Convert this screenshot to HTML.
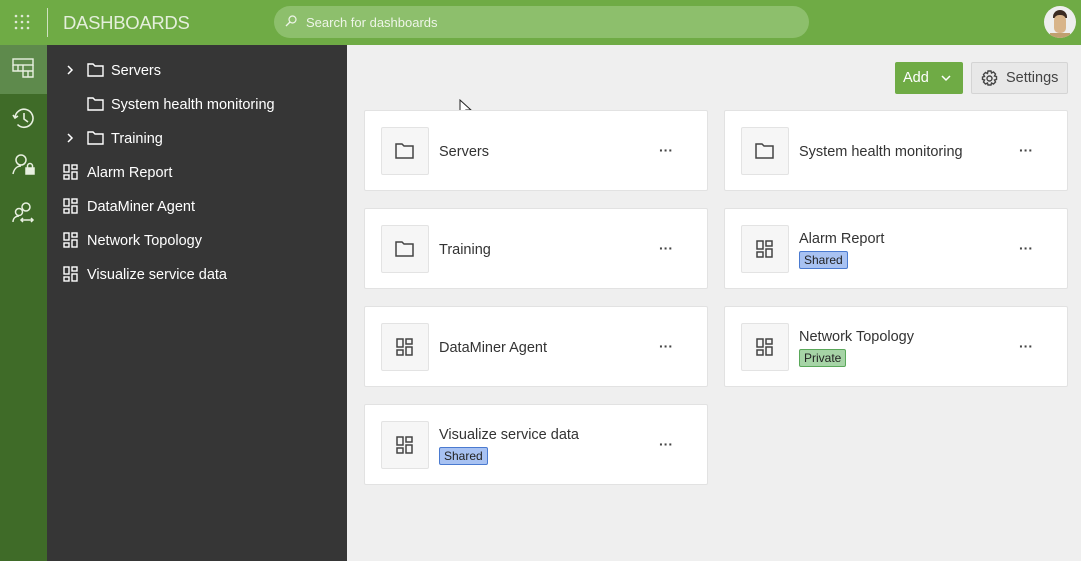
<!DOCTYPE html>
<html><head><style>
*{box-sizing:border-box;margin:0;padding:0}
body{width:1081px;height:561px;overflow:hidden;font-family:"Liberation Sans",sans-serif;background:#efefef;position:relative}
.hdr{position:absolute;left:0;top:0;width:1081px;height:45px;background:#6fab45}
.rail{position:absolute;left:0;top:45px;width:47px;height:516px;background:#3f6b28}
.rail .act{position:absolute;left:0;top:0;width:47px;height:49px;background:#5e8a4c}
.side{position:absolute;left:47px;top:45px;width:300px;height:516px;background:#363636;color:#fff;font-size:14.5px}
.si{position:absolute;height:20px;line-height:20px;display:flex;align-items:center}
.card{position:absolute;width:344px;height:81px;background:#fff;border:1px solid #e2e2e2;border-radius:2px}
.ib{position:absolute;left:16px;top:16px;width:48px;height:48px;background:#f6f6f6;border:1px solid #e3e3e3;border-radius:2px;display:flex;align-items:center;justify-content:center}
.t{position:absolute;left:74px;font-size:14.5px;color:#333}
.dots{position:absolute;left:294px;top:31px;font-size:14px;color:#444;font-weight:bold}
.badge{position:absolute;left:74px;top:42px;font-size:12px;padding:0 4px;height:18px;line-height:16px;border-radius:2px;color:#222}
.sh{background:#a8c2f2;border:1px solid #4a7ad0}
.pr{background:#a6d4a6;border:1px solid #5aa85a}
</style></head><body>
<div class="hdr">
<svg style="position:absolute;left:14px;top:14px" width="16" height="16"><g fill="#dfe9d5"><circle cx="2" cy="2" r="1.3"/><circle cx="8" cy="2" r="1.3"/><circle cx="14" cy="2" r="1.3"/><circle cx="2" cy="8" r="1.3"/><circle cx="8" cy="8" r="1.3"/><circle cx="14" cy="8" r="1.3"/><circle cx="2" cy="14" r="1.3"/><circle cx="8" cy="14" r="1.3"/><circle cx="14" cy="14" r="1.3"/></g></svg>
<div style="position:absolute;left:47px;top:8px;width:1px;height:29px;background:#cfe2c0"></div>
<div style="position:absolute;left:63px;top:12px;font-size:18.5px;color:#e4efdc;letter-spacing:-0.3px">DASHBOARDS</div>
<div style="position:absolute;left:274px;top:6px;width:535px;height:32px;border-radius:16px;background:#8dbf6c"></div>
<svg style="position:absolute;left:285px;top:15px" width="12" height="12"><circle cx="7.5" cy="4.5" r="3.5" fill="none" stroke="#eef5e8" stroke-width="1.2"/><path d="M5 7L1 11" stroke="#eef5e8" stroke-width="1.3"/></svg>
<div style="position:absolute;left:306px;top:15px;font-size:13px;color:#eef5e8">Search for dashboards</div>
<div style="position:absolute;left:1044px;top:6px;width:32px;height:32px;border-radius:50%;background:#eee;overflow:hidden"><div style="position:absolute;left:9px;top:4px;width:14px;height:8px;background:#3a2a22;border-radius:7px 7px 0 0"></div><div style="position:absolute;left:10px;top:9px;width:12px;height:18px;background:#d8b48a;border-radius:5px"></div><div style="position:absolute;left:6px;top:27px;width:20px;height:8px;background:#c0a070"></div></div>
</div>
<div class="rail"><div class="act"></div>
<svg style="position:absolute;left:12px;top:13px" width="24" height="22" fill="none" stroke="#e8f0e0" stroke-width="1.4"><rect x="1" y="1" width="20" height="6"/><path d="M1 7v6h10M6 7v6M11 7v12h10V7M16 13h5M16 13v6M11 13h10"/></svg>
<svg style="position:absolute;left:12px;top:62px" width="24" height="24" fill="none" stroke="#e8f0e0" stroke-width="1.6"><path d="M3 11a9 9 0 1 1 2.5 6.5"/><path d="M1 8l2 3 3-2"/><path d="M12 6v6l4 3"/></svg>
<svg style="position:absolute;left:12px;top:108px" width="24" height="24" fill="none" stroke="#e8f0e0" stroke-width="1.5"><circle cx="9" cy="7" r="5"/><path d="M1 21c1-5 4-8 8-8"/><rect x="14" y="15" width="8" height="6" fill="#e8f0e0"/><path d="M15.5 15v-2a2.5 2.5 0 0 1 5 0v2"/></svg>
<svg style="position:absolute;left:12px;top:156px" width="24" height="24" fill="none" stroke="#e8f0e0" stroke-width="1.5"><circle cx="14" cy="6" r="4"/><circle cx="7" cy="11" r="3.5"/><path d="M1 21c0-4 3-6 6-6M9 19h12M11 17l-2 2 2 2M19 17l2 2-2 2"/></svg>
</div>
<div class="side">
<svg style="position:absolute;left:19px;top:20px" width="8" height="10" fill="none" stroke="#fff" stroke-width="1.5"><path d="M2 1l4 4-4 4"/></svg>
<svg style="position:absolute;left:19px;top:88px" width="8" height="10" fill="none" stroke="#fff" stroke-width="1.5"><path d="M2 1l4 4-4 4"/></svg>
<svg style="position:absolute;left:40px;top:18px" width="17" height="14" fill="none" stroke="#fff" stroke-width="1.4"><path d="M1 1h5l2 2h8v10H1z"/></svg>
<svg style="position:absolute;left:40px;top:52px" width="17" height="14" fill="none" stroke="#fff" stroke-width="1.4"><path d="M1 1h5l2 2h8v10H1z"/></svg>
<svg style="position:absolute;left:40px;top:86px" width="17" height="14" fill="none" stroke="#fff" stroke-width="1.4"><path d="M1 1h5l2 2h8v10H1z"/></svg>
<div class="si" style="left:64px;top:16px">Servers</div>
<div class="si" style="left:64px;top:50px">System health monitoring</div>
<div class="si" style="left:64px;top:84px">Training</div>
<svg style="position:absolute;left:16px;top:119px" width="16" height="16" fill="none" stroke="#fff" stroke-width="1.4"><rect x="1" y="1" width="5" height="7"/><rect x="9" y="1" width="5" height="4"/><rect x="1" y="11" width="5" height="4"/><rect x="9" y="8" width="5" height="7"/></svg>
<svg style="position:absolute;left:16px;top:153px" width="16" height="16" fill="none" stroke="#fff" stroke-width="1.4"><rect x="1" y="1" width="5" height="7"/><rect x="9" y="1" width="5" height="4"/><rect x="1" y="11" width="5" height="4"/><rect x="9" y="8" width="5" height="7"/></svg>
<svg style="position:absolute;left:16px;top:187px" width="16" height="16" fill="none" stroke="#fff" stroke-width="1.4"><rect x="1" y="1" width="5" height="7"/><rect x="9" y="1" width="5" height="4"/><rect x="1" y="11" width="5" height="4"/><rect x="9" y="8" width="5" height="7"/></svg>
<svg style="position:absolute;left:16px;top:221px" width="16" height="16" fill="none" stroke="#fff" stroke-width="1.4"><rect x="1" y="1" width="5" height="7"/><rect x="9" y="1" width="5" height="4"/><rect x="1" y="11" width="5" height="4"/><rect x="9" y="8" width="5" height="7"/></svg>
<div class="si" style="left:40px;top:118px">Alarm Report</div>
<div class="si" style="left:40px;top:152px">DataMiner Agent</div>
<div class="si" style="left:40px;top:186px">Network Topology</div>
<div class="si" style="left:40px;top:220px">Visualize service data</div>
</div>
<div style="position:absolute;left:895px;top:62px;width:68px;height:32px;background:#6fab45;border-radius:2px;color:#fff;font-size:14.5px;line-height:33px;padding-left:8px">Add <svg style="position:absolute;left:46px;top:13px" width="10" height="7" fill="none" stroke="#fff" stroke-width="1.5"><path d="M1 1l4 4 4-4"/></svg></div>
<div style="position:absolute;left:971px;top:62px;width:97px;height:32px;background:#e8e8e8;border:1px solid #d4d4d4;border-radius:2px;color:#444;font-size:14.5px;line-height:31px;padding-left:34px">Settings
<svg style="position:absolute;left:9px;top:7px" width="17" height="17" fill="none" stroke="#444" stroke-width="1.4"><circle cx="8.5" cy="8.5" r="2.5"/><path d="M7 1h3l.5 2 2-1 2 2-1 2 2 .5v3l-2 .5 1 2-2 2-2-1-.5 2H7l-.5-2-2 1-2-2 1-2-2-.5V7l2-.5-1-2 2-2 2 1z"/></svg></div>
<svg style="position:absolute;left:459px;top:99px" width="13" height="20"><path d="M1 1v15l4-4 3 6 2-1-3-6h5z" fill="#fff" stroke="#222" stroke-width="1"/></svg>

<div class="card" style="left:364px;top:110px"><div class="ib"><svg width="20" height="16" fill="none" stroke="#444" stroke-width="1.5"><path d="M1 1h6l2 2h9v12H1z"/></svg></div><div class="t" style="top:33px">Servers</div><div class="dots">···</div></div>
<div class="card" style="left:724px;top:110px"><div class="ib"><svg width="20" height="16" fill="none" stroke="#444" stroke-width="1.5"><path d="M1 1h6l2 2h9v12H1z"/></svg></div><div class="t" style="top:33px">System health monitoring</div><div class="dots">···</div></div>
<div class="card" style="left:364px;top:208px"><div class="ib"><svg width="20" height="16" fill="none" stroke="#444" stroke-width="1.5"><path d="M1 1h6l2 2h9v12H1z"/></svg></div><div class="t" style="top:33px">Training</div><div class="dots">···</div></div>
<div class="card" style="left:724px;top:208px"><div class="ib"><svg width="18" height="18" fill="none" stroke="#444" stroke-width="1.5"><rect x="1" y="1" width="6" height="8"/><rect x="10" y="1" width="6" height="5"/><rect x="1" y="12" width="6" height="5"/><rect x="10" y="9" width="6" height="8"/></svg></div><div class="t" style="top:22px">Alarm Report</div><div class="badge sh">Shared</div><div class="dots">···</div></div>
<div class="card" style="left:364px;top:306px"><div class="ib"><svg width="18" height="18" fill="none" stroke="#444" stroke-width="1.5"><rect x="1" y="1" width="6" height="8"/><rect x="10" y="1" width="6" height="5"/><rect x="1" y="12" width="6" height="5"/><rect x="10" y="9" width="6" height="8"/></svg></div><div class="t" style="top:33px">DataMiner Agent</div><div class="dots">···</div></div>
<div class="card" style="left:724px;top:306px"><div class="ib"><svg width="18" height="18" fill="none" stroke="#444" stroke-width="1.5"><rect x="1" y="1" width="6" height="8"/><rect x="10" y="1" width="6" height="5"/><rect x="1" y="12" width="6" height="5"/><rect x="10" y="9" width="6" height="8"/></svg></div><div class="t" style="top:22px">Network Topology</div><div class="badge pr">Private</div><div class="dots">···</div></div>
<div class="card" style="left:364px;top:404px"><div class="ib"><svg width="18" height="18" fill="none" stroke="#444" stroke-width="1.5"><rect x="1" y="1" width="6" height="8"/><rect x="10" y="1" width="6" height="5"/><rect x="1" y="12" width="6" height="5"/><rect x="10" y="9" width="6" height="8"/></svg></div><div class="t" style="top:22px">Visualize service data</div><div class="badge sh">Shared</div><div class="dots">···</div></div>
</body></html>
